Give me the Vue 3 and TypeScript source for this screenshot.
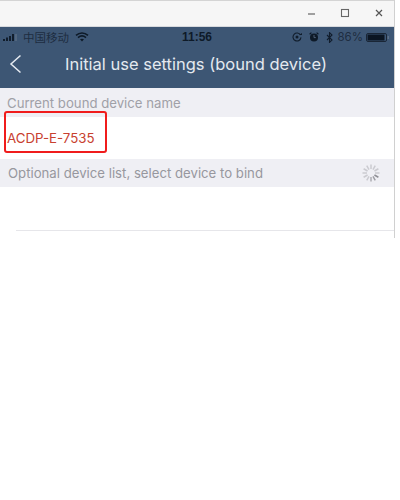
<script setup lang="ts">
const spokes = Array.from({ length: 12 }, (_, i) => ({
  angle: i * 30,
  opacity: i >= 4 && i <= 6 ? 0.75 - (i - 4) * 0.12 : 0.28,
}))
</script>

<template>
  <div class="page">
    <div class="frame">
      <header class="winbar">
        <svg class="winicons" width="76" height="14" viewBox="0 0 76 14">
          <path d="M0 7h7" stroke="#666" stroke-width="1.2" />
          <rect x="33.5" y="2.5" width="7" height="7" fill="none" stroke="#666" stroke-width="1.1" />
          <path d="M68 3l6 6M74 3l-6 6" stroke="#555" stroke-width="1.2" />
        </svg>
      </header>
      <section class="hero">
        <div class="status">
          <div class="status-left">
            <svg width="14" height="7" viewBox="0 0 14 7">
              <rect x="0" y="5" width="2" height="2" fill="#111d2c" />
              <rect x="3" y="3.5" width="2" height="3.5" fill="#111d2c" />
              <rect x="6" y="2" width="2" height="5" fill="#111d2c" />
              <rect x="9" y="0" width="2" height="7" fill="#111d2c" />
              <rect x="12" y="0" width="2" height="7" fill="#53677f" />
            </svg>
            <span class="carrier">中国移动</span>
            <svg class="wifi" width="14" height="10" viewBox="0 0 14 10">
              <path d="M1 3.4C4.6.3 9.4.3 13 3.4M3 5.6c2.4-2 5.6-2 8 0" fill="none" stroke="#0e1a28" stroke-width="1.6" />
              <path d="M5 7.3c1.2-.9 2.8-.9 4 0L7 9.6z" fill="#0e1a28" />
            </svg>
          </div>
          <span class="clock">11:56</span>
          <div class="status-right">
            <svg width="10" height="10" viewBox="0 0 10 10">
              <path d="M8.5 3A4 4 0 1 0 9 5.4" fill="none" stroke="#111d2c" stroke-width="1.1" />
              <circle cx="5" cy="5" r="1.5" fill="#111d2c" />
              <path d="M7 3h3V1z" fill="#111d2c" />
            </svg>
            <svg class="alarm" width="10" height="10" viewBox="0 0 10 10">
              <circle cx="5" cy="5.4" r="4" fill="#0e1a28" />
              <path d="M5 3v2.6h1.8" fill="none" stroke="#5d7088" stroke-width=".8" />
              <path d="M.6 2.2 2.4.6M9.4 2.2 7.6.6" stroke="#0e1a28" stroke-width="1.2" />
            </svg>
            <svg class="bt" width="7" height="11" viewBox="0 0 7 11">
              <path d="M1 3l5 5-2.5 2.4V.6L6 3 1 8" fill="none" stroke="#111d2c" stroke-width="1.1" />
            </svg>
            <span class="pct">86%</span>
            <svg class="battery" width="23" height="9" viewBox="0 0 23 9">
              <rect x=".5" y=".5" width="20" height="8" rx="1.5" fill="none" stroke="#1a2636" />
              <rect x="1.5" y="1.5" width="17" height="6" fill="#0b1522" />
              <rect x="21.5" y="3" width="1.5" height="3" fill="#5d7088" />
            </svg>
          </div>
        </div>
        <div class="navrow">
          <svg class="back" width="13" height="20" viewBox="0 0 13 20">
            <path d="M11.5 1.5 2 10l9.5 8.5" fill="none" stroke="#e6ebf1" stroke-width="1.5" />
          </svg>
          <h1 class="title">Initial use settings (bound device)</h1>
        </div>
      </section>
      <div class="band band-first">Current bound device name</div>
      <div class="device">
        <span class="device-name">ACDP-E-7535</span>
        <div class="mark"></div>
      </div>
      <div class="band band-second">
        <span>Optional device list, select device to bind</span>
        <svg class="spinner" width="20" height="20" viewBox="0 0 20 20">
          <line
            v-for="s in spokes"
            :key="s.angle"
            x1="10"
            y1="1.5"
            x2="10"
            y2="6"
            stroke="#6f6f76"
            stroke-width="1.5"
            :opacity="s.opacity"
            :transform="`rotate(${s.angle} 10 10)`"
          />
        </svg>
      </div>
      <div class="empty"><div class="rule"></div></div>
    </div>
  </div>
</template>

<style>
html, body { margin: 0; background: #fff; }
</style>

<style scoped>
.page {
  width: 400px;
  height: 500px;
  overflow: hidden;
  background: #fff;
  font-family: Inter, "Liberation Sans", Arial, sans-serif;
}
.frame {
  width: 395px;
  height: 238px;
  box-sizing: border-box;
  border-right: 1px solid #d0d0d0;
}
.winbar {
  height: 27px;
  box-sizing: border-box;
  border-top: 1px solid #d4d4d4;
  border-bottom: 1px solid #d8dade;
  background: #f6f6f6;
  display: flex;
  justify-content: flex-end;
  align-items: center;
  padding-right: 10px;
}
.winicons { margin-top: 1px; }
.hero {
  height: 61px;
  background: #3d5674;
}
.status {
  height: 20px;
  display: grid;
  grid-template-columns: 1fr auto 1fr;
  align-items: center;
  padding: 0 5px;
  color: #111d2c;
  font-size: 11px;
}
.status-left, .status-right {
  display: flex;
  align-items: center;
}
.status-left { gap: 6px; margin-left: -2px; }
.carrier {
  font-family: "Noto Sans CJK SC", "Liberation Sans", sans-serif;
  font-size: 11.5px;
  line-height: 14px;
  margin-top: -1px;
  color: #1d2d41;
}
.clock {
  font-family: "Liberation Sans", Arial, sans-serif;
  font-weight: 700;
  font-size: 12px;
  color: #0e1a28;
}
.status-right {
  justify-content: flex-end;
  gap: 4px;
}
.alarm { margin-left: 3px; }
.bt { margin-left: 3px; }
.pct { color: #1d2d41; font-size: 11.5px; margin-right: -1px; }
.navrow {
  height: 41px;
  display: flex;
  align-items: center;
  padding-left: 9px;
  padding-bottom: 8px;
  box-sizing: border-box;
}
.back { flex: none; }
.title {
  margin: 0 0 0 43px;
  font-size: 16.5px;
  font-weight: 400;
  color: #e4e9ef;
  white-space: nowrap;
}
.band {
  background: #efeff4;
  color: #a0a0a7;
  font-size: 13.2px;
  display: flex;
  align-items: center;
  padding-left: 7px;
  box-sizing: border-box;
}
.band-first { height: 29px; }
.band-second {
  height: 28px;
  padding-left: 8px;
  padding-right: 13px;
  justify-content: space-between;
  color: #97979e;
}
.device {
  position: relative;
  height: 42px;
  background: #fff;
  display: flex;
  align-items: flex-end;
  padding: 0 0 13px 7px;
  box-sizing: border-box;
}
.device-name {
  color: #c8402f;
  font-size: 13.3px;
}
.mark {
  position: absolute;
  left: 4px;
  top: -6px;
  width: 103px;
  height: 42px;
  box-sizing: border-box;
  border: 2.5px solid #f01c1c;
  border-radius: 3px;
}
.empty {
  height: 51px;
  padding-left: 16px;
  display: flex;
  align-items: flex-end;
  background: #fff;
}
.rule {
  flex: 1;
  height: 1px;
  background: #e6e6ea;
  margin-bottom: 7px;
}
</style>
